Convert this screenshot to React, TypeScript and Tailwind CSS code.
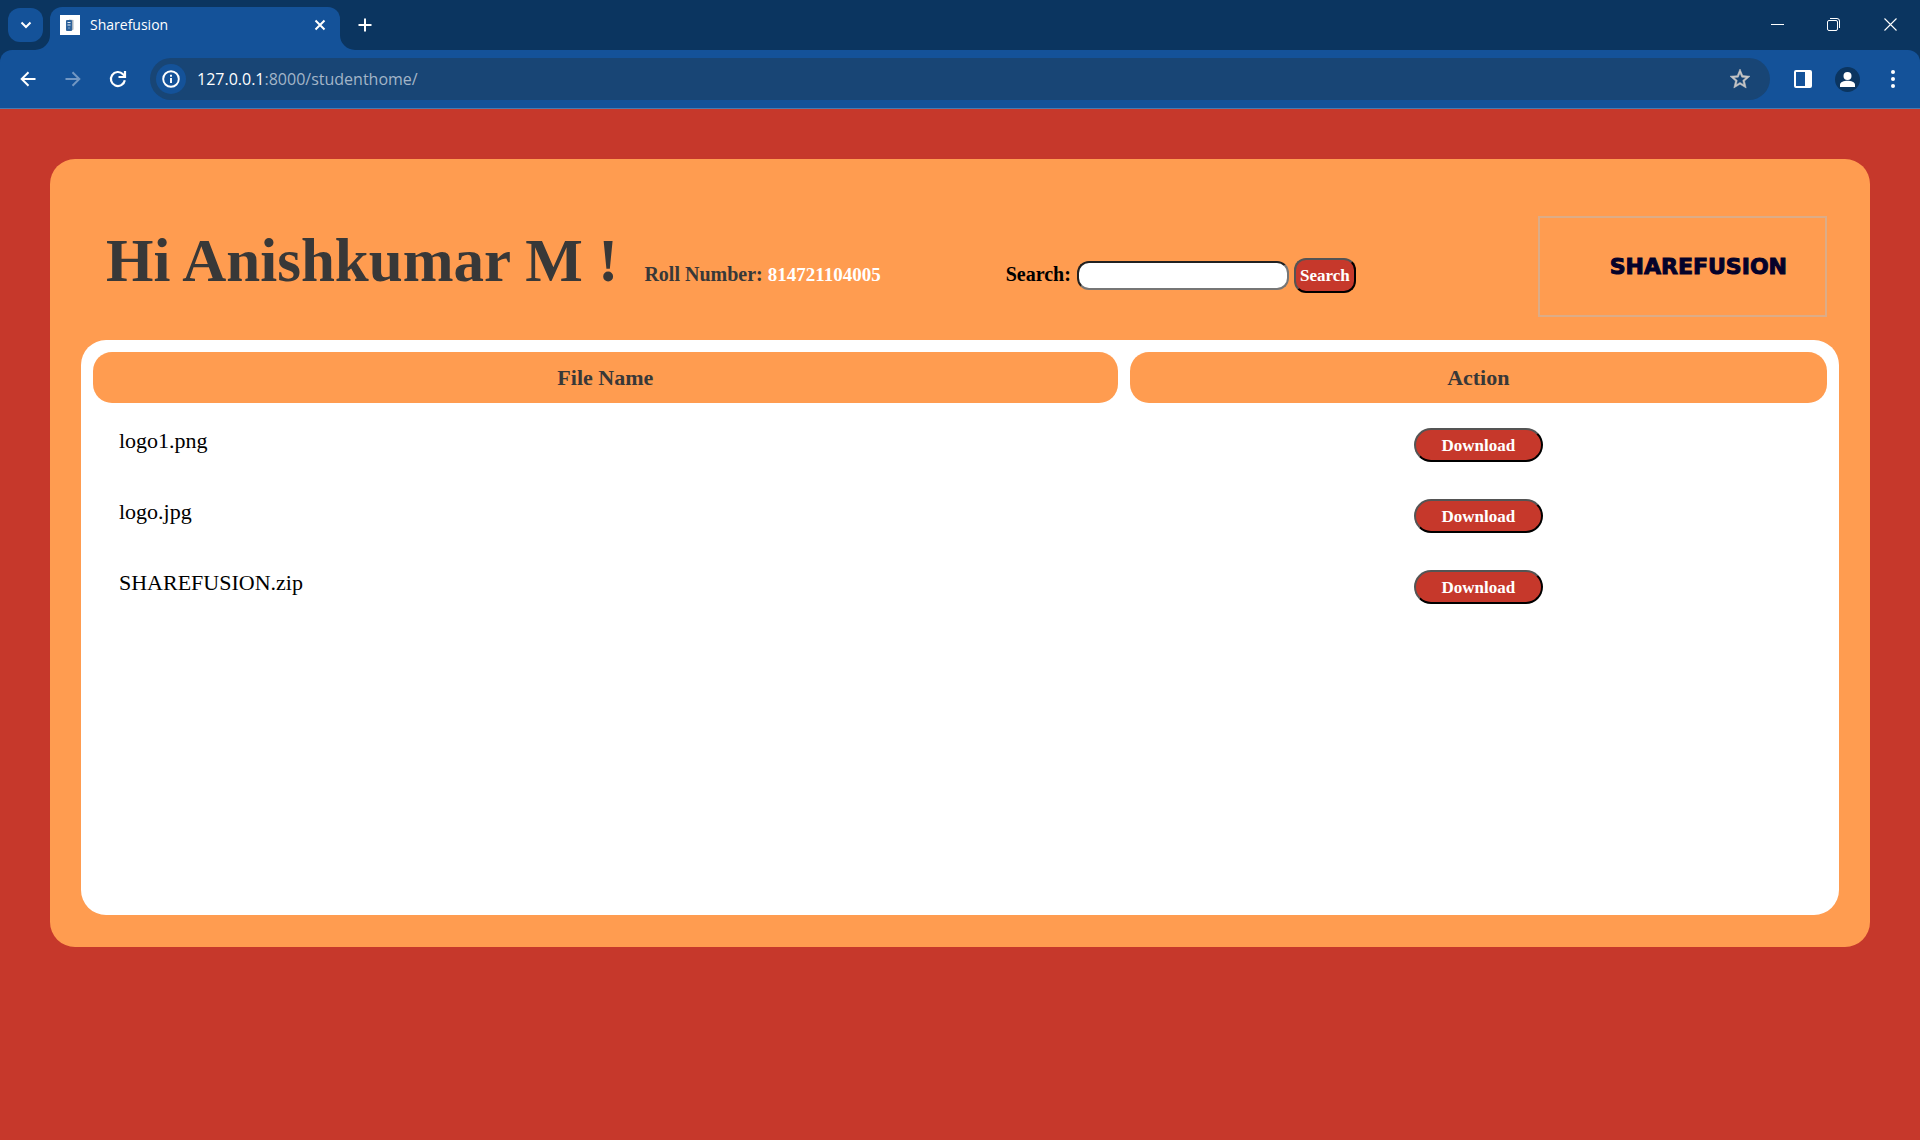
import React from "react";

const files = ["logo1.png", "logo.jpg", "SHAREFUSION.zip"];

function Favicon() {
  return (
    <svg viewBox="0 0 20 20" className="size-5 shrink-0" aria-hidden="true">
      <rect width="20" height="20" fill="#fff" />
      <path d="M9 4.5l4.5.5v9.5L11 16z" fill="#a9b3bd" />
      <rect x="6" y="5" width="6" height="11" rx="1" fill="#2f639b" />
      <path d="M7.5 7.5h3M7.5 10h3" stroke="#e8f0f8" strokeWidth="1.2" />
      <path d="M8 13h2" stroke="#7fa3c9" strokeWidth="1" />
    </svg>
  );
}

function TabFlare({ className }: { className: string }) {
  return (
    <svg viewBox="0 0 15 15" className={className} aria-hidden="true">
      <path d="M15 0v15H0A15 15 0 0 0 15 0z" fill="#145299" />
    </svg>
  );
}

function TabStrip() {
  return (
    <div className="flex h-[50px] items-start bg-[#0b3560] pl-2 text-white">
      <button aria-label="Search tabs" className="mt-2 flex h-[34px] w-[35px] items-center justify-center rounded-xl bg-[#145299]">
        <svg viewBox="0 0 12 12" className="size-3" fill="none" stroke="currentColor" strokeWidth="2" aria-hidden="true">
          <path d="M1.5 3.5L6 8l4.500-4.500" />
        </svg>
      </button>
      <div className="relative ml-[7px] mt-[7px] flex h-[43px] w-[290px] items-start rounded-t-xl bg-[#145299] pl-[10px] pr-[10px] pt-2">
        <TabFlare className="absolute -left-[15px] bottom-0 size-[15px]" />
        <TabFlare className="absolute -right-[15px] bottom-0 size-[15px] -scale-x-100" />
        <Favicon />
        <span className="ml-[10px] flex-1 text-sm leading-5">Sharefusion</span>
        <button aria-label="Close tab" className="flex size-5 items-center justify-center">
          <svg viewBox="0 0 12 12" className="size-3" stroke="currentColor" strokeWidth="2" aria-hidden="true">
            <path d="M1.500 1.500l9 9M10.500 1.500l-9 9" />
          </svg>
        </button>
      </div>
      <button aria-label="New tab" className="ml-[9px] flex h-[50px] w-8 items-center justify-center">
        <svg viewBox="0 0 14 14" className="size-[14px]" stroke="currentColor" strokeWidth="2" aria-hidden="true">
          <path d="M7 .5v13M.5 7h13" />
        </svg>
      </button>
      <div className="ml-auto flex">
        <button aria-label="Minimize" className="flex h-12 w-14 items-center justify-center">
          <svg viewBox="0 0 13 13" className="size-[13px]" stroke="currentColor" aria-hidden="true">
            <path d="M0 6.500h13" />
          </svg>
        </button>
        <button aria-label="Restore" className="flex h-12 w-14 items-center justify-center">
          <svg viewBox="0 0 13 13" className="size-[13px]" fill="none" stroke="currentColor" aria-hidden="true">
            <rect x=".5" y="2.500" width="10" height="10" rx="1.500" />
            <path d="M3 .5h7a2.500 2.500 0 0 1 2.500 2.500v7" />
          </svg>
        </button>
        <button aria-label="Close window" className="flex h-12 w-[59px] items-center justify-center">
          <svg viewBox="0 0 13 13" className="size-[13px]" stroke="currentColor" strokeWidth="1.100" aria-hidden="true">
            <path d="M.5.5l12 12M12.500.5l-12 12" />
          </svg>
        </button>
      </div>
    </div>
  );
}

function Toolbar() {
  return (
    <div className="bg-[#0b3560]">
      <div className="flex h-[59px] items-center rounded-t-xl border-b border-[#4a7bb0] bg-[#145299] pl-[5px] pr-[5px] text-white">
        <button aria-label="Back" className="flex size-[45px] items-center justify-center">
          <svg viewBox="0 0 16 16" className="size-4" fill="none" stroke="currentColor" strokeWidth="2" aria-hidden="true">
            <path d="M15.500 8H2M8.500 1.200L1.700 8l6.800 6.800" />
          </svg>
        </button>
        <button aria-label="Forward" className="flex size-[45px] items-center justify-center text-[#7297c3]">
          <svg viewBox="0 0 16 16" className="size-4" fill="none" stroke="currentColor" strokeWidth="2" aria-hidden="true">
            <path d="M.5 8H14M7.500 1.200L14.300 8l-6.800 6.800" />
          </svg>
        </button>
        <button aria-label="Reload" className="flex size-[45px] items-center justify-center">
          <svg viewBox="0 0 18 18" className="size-[18px]" fill="none" stroke="currentColor" strokeWidth="2.200" aria-hidden="true">
            <path d="M15.800 10.200A7 7 0 1 1 14 4.200L15.600 5.800" />
            <path d="M16 1v6h-6.500" />
          </svg>
        </button>
        <div className="ml-[10px] flex h-[42px] flex-1 items-center rounded-full bg-[#184575] pl-[6px] pr-[18px]">
          <button aria-label="Site information" className="flex size-[30px] items-center justify-center rounded-full bg-[#145299]">
            <svg viewBox="0 0 18 18" className="size-[18px]" fill="none" stroke="currentColor" strokeWidth="1.900" aria-hidden="true">
              <circle cx="9" cy="9" r="7.800" />
              <path d="M9 8v5M9 4.800v1.900" />
            </svg>
          </button>
          <span className="ml-[11px] flex-1 text-base leading-6 text-[#a3b5c8]">
            <span className="text-white">127.0.0.1</span>:8000/studenthome/
          </span>
          <button aria-label="Bookmark this tab" className="flex size-6 items-center justify-center text-[#c6c6c6]">
            <svg viewBox="0 0 24 24" className="size-6" fill="currentColor" stroke="currentColor" strokeWidth=".5" aria-hidden="true">
              <path d="M22 9.240l-7.190-.620L12 2 9.190 8.630 2 9.240l5.460 4.730L5.820 21 12 17.270 18.180 21l-1.630-7.030L22 9.240zM12 15.400l-3.760 2.270 1-4.280-3.320-2.880 4.380-.38L12 6.100l1.710 4.040 4.380.38-3.320 2.880 1 4.280L12 15.400z" />
            </svg>
          </button>
        </div>
        <button aria-label="Side panel" className="ml-[10px] flex size-[45px] items-center justify-center">
          <svg viewBox="0 0 18 18" className="size-[18px]" aria-hidden="true">
            <rect x="1" y="1" width="16" height="16" rx="1" fill="none" stroke="currentColor" strokeWidth="2" />
            <path d="M11 1h6v16h-6z" fill="currentColor" />
          </svg>
        </button>
        <button aria-label="Profile" className="flex size-[45px] items-center justify-center">
          <svg viewBox="0 0 25 25" className="size-[25px]" aria-hidden="true">
            <circle cx="12.500" cy="12.500" r="12.500" fill="#0b3560" />
            <circle cx="12.500" cy="9" r="4" fill="#fff" />
            <path d="M5 20v-2.200c0-2.600 4-4 7.500-4s7.500 1.400 7.500 4V20z" fill="#fff" />
          </svg>
        </button>
        <button aria-label="Menu" className="flex size-[45px] items-center justify-center">
          <svg viewBox="0 0 4 18" className="h-[18px] w-1" fill="currentColor" aria-hidden="true">
            <circle cx="2" cy="2" r="2" />
            <circle cx="2" cy="9" r="2" />
            <circle cx="2" cy="16" r="2" />
          </svg>
        </button>
      </div>
    </div>
  );
}

function PageHeader() {
  return (
    <header className="flex items-center pb-[23px] pl-[25px] pr-3 pt-[57px]">
      <div className="flex flex-1 items-baseline whitespace-nowrap pb-3">
        <h1 className="text-[61px] font-bold leading-[72px] text-[#383838]">Hi Anishkumar M !</h1>
        <p className="ml-[26px] text-xl font-bold text-[#383838]">
          Roll Number: <span className="text-[19px] text-white">814721104005</span>
        </p>
        <form className="ml-[125px] flex items-center" onSubmit={(e) => e.preventDefault()}>
          <label htmlFor="search" className="pb-1 text-xl font-bold text-black">Search:</label>
          <input
            id="search"
            type="text"
            className="ml-[6px] h-[29px] w-[212px] rounded-xl border-2 border-[#767676] bg-white px-2 text-base [border-style:inset]"
          />
          <button type="submit" className="ml-[5px] h-[35px] w-[62px] rounded-xl border-2 border-black bg-[#c6382b] text-[17px] font-bold leading-6 text-white [border-style:outset]">
            Search
          </button>
        </form>
      </div>
      <div className="flex h-[101px] w-[289px] items-center justify-end border-2 border-[#dcac88] pr-[38px]">
        <span className="font-['DejaVu_Sans'] text-[22px] font-bold leading-6 text-[#05022a] [-webkit-text-stroke:1px_#05022a]">SHAREFUSION</span>
      </div>
    </header>
  );
}

function FileTable() {
  return (
    <div className="min-h-[575px] rounded-[25px] bg-white">
      <table className="w-full table-fixed border-separate border-spacing-3 text-[22px] leading-[26px] text-black">
        <thead>
          <tr className="text-[#383838]">
            <th className="w-[59.5%] rounded-[19px] bg-[#ff9c50] pb-3 pt-[13px] font-bold">File Name</th>
            <th className="rounded-[19px] bg-[#ff9c50] pb-3 pt-[13px] font-bold">Action</th>
          </tr>
        </thead>
        <tbody>
          {files.map((name) => (
            <tr key={name}>
              <td className="pb-3 pl-[26px] pt-[13px] align-top">{name}</td>
              <td className="pb-3 pt-[13px] text-center align-top">
                <button className="mx-auto block h-[34px] w-[129px] rounded-full border-2 border-black bg-[#c6382b] pt-0.5 text-[17px] font-bold leading-6 text-white [border-style:outset]">
                  Download
                </button>
              </td>
            </tr>
          ))}
        </tbody>
      </table>
    </div>
  );
}

export default function App() {
  return (
    <div className="flex min-h-screen flex-col bg-[#c6382b]">
      <div className="font-['Open_Sans','Noto_Sans',sans-serif]">
        <TabStrip />
        <Toolbar />
      </div>
      <main className="px-[50px] py-[50px] font-['Liberation_Serif',serif]">
        <div className="rounded-[25px] bg-[#ff9c50] px-[31px] pb-8">
          <PageHeader />
          <FileTable />
        </div>
      </main>
    </div>
  );
}
